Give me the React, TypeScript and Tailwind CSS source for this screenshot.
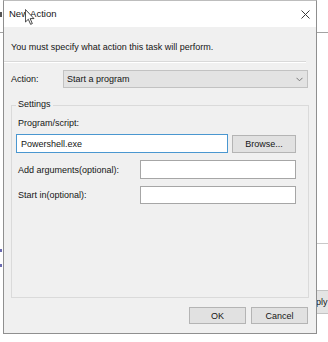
export default function App() {
  return (
    <div className="relative w-[328px] h-[342px] overflow-hidden bg-white [font-family:'Liberation_Sans',Arial,sans-serif] text-[9px] leading-[12px] text-[#151515]">
      {/* remnants of the window behind */}
      <div className="absolute left-0 right-0 top-[32px] h-px bg-[#a3a3a3]" />
      <div className="absolute left-0 top-[12px] w-[2px] h-[5px] bg-[#555]" />
      <div className="absolute left-[290px] right-0 top-[243px] h-px bg-[#c9c9c9]" />
      <div className="absolute left-0 top-[249px] w-[2px] h-[3px] bg-[#6b6bb0]" />
      <div className="absolute left-0 top-[264px] w-[2px] h-[3px] bg-[#6b6bb0]" />
      <div className="absolute left-[290px] top-[290px] w-[50px] h-[24px] bg-[#e4e4e4] border border-[#c4c4c4] flex items-center pl-[14px]">
        Apply
      </div>

      {/* dialog window */}
      <div className="absolute left-[3px] top-0 w-[314px] h-[334px] border border-[#8f8f8f] border-t-[#bdbdbd] bg-[#f0f0f0] flex flex-col">
        {/* title bar */}
        <div className="h-[26px] bg-white flex items-center justify-between pl-[5px] pr-[6px]">
          <span className="text-[9.5px]">New Action</span>
          <svg width="9" height="9" viewBox="0 0 9 9" className="block">
            <path d="M0.5 0.5 L8.5 8.5 M8.5 0.5 L0.5 8.5" stroke="#3a3a3a" strokeWidth="1" fill="none" />
          </svg>
        </div>

        {/* body */}
        <div className="flex flex-col">
          <div className="mt-[14px] pl-[7px] h-[12px]">You must specify what action this task will perform.</div>
          <div className="mt-[8px] mr-[10px] h-[2px] border-t border-[#d9d9d9] border-b border-b-white" />

          <div className="mt-[7px] flex items-center h-[18px]">
            <span className="pl-[7px] w-[59px]">Action:</span>
            <div className="w-[245px] h-[18px] bg-[#e3e3e3] border border-[#c2c2c2] flex items-center justify-between pl-[3px] pr-[4px]">
              <span>Start a program</span>
              <svg width="7" height="5" viewBox="0 0 7 5" className="block">
                <path d="M0.5 0.8 L3.5 3.8 L6.5 0.8" stroke="#777" strokeWidth="1" fill="none" />
              </svg>
            </div>
          </div>

          {/* settings group */}
          <div className="relative mt-[17px] ml-[7px] w-[298px] h-[193px] border border-[#dadada] flex flex-col">
            <span className="absolute left-[4px] top-[-8px] px-[2px] bg-[#f0f0f0]">Settings</span>
            <div className="mt-[11px] pl-[6px] h-[12px]">Program/script:</div>
            <div className="mt-[5px] flex items-start">
              <div className="ml-[4px] w-[212px] h-[19px] bg-white border border-[#4a97d0] flex items-center pl-[4px]">
                Powershell.exe
              </div>
              <div className="ml-[4px] mt-[1px] w-[64px] h-[18px] bg-[#e1e1e1] border border-[#b4b4b4] flex items-center justify-center">
                Browse...
              </div>
            </div>
            <div className="mt-[7px] flex items-center h-[19px]">
              <span className="pl-[6px] w-[128px]">Add arguments(optional):</span>
              <div className="w-[156px] h-[19px] bg-white border border-[#a6a6a6]" />
            </div>
            <div className="mt-[7px] flex items-center h-[18px]">
              <span className="pl-[6px] w-[128px]">Start in(optional):</span>
              <div className="w-[156px] h-[18px] bg-white border border-[#a6a6a6]" />
            </div>
          </div>

          <div className="mt-[9px] flex justify-end gap-[5px] pr-[8px]">
            <div className="w-[57px] h-[17px] bg-[#e1e1e1] border border-[#b4b4b4] flex items-center justify-center">OK</div>
            <div className="w-[57px] h-[17px] bg-[#e1e1e1] border border-[#b4b4b4] flex items-center justify-center">Cancel</div>
          </div>
        </div>
      </div>

      {/* mouse cursor over the title */}
      <svg className="absolute left-[25px] top-[9px]" width="10" height="16" viewBox="0 0 12 19">
        <path d="M0.5 0.5 L0.5 15.5 L4 12.2 L6.7 18.3 L8.8 17.4 L6.2 11.4 L10.8 11.4 Z" fill="white" stroke="#222" strokeWidth="1" strokeLinejoin="round" />
      </svg>
    </div>
  );
}
